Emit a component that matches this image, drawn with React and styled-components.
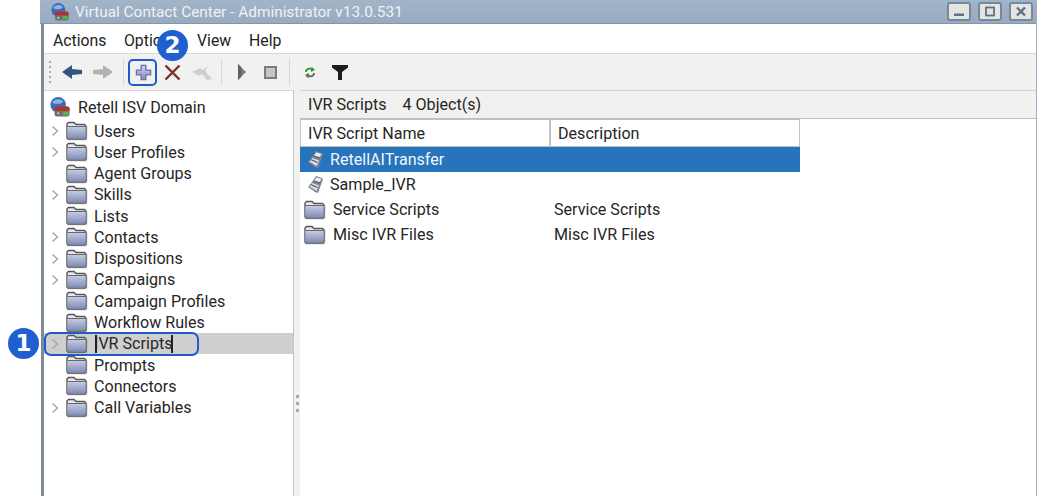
import React from "react";
import styled, { createGlobalStyle } from "styled-components";

const Global = createGlobalStyle`
  html, body { margin: 0; padding: 0; background: #fff; overflow: hidden; }
  body { font-family: Roboto, "Liberation Sans", sans-serif; }
`;
const Page = styled.div`
  position: relative; width: 1038px; height: 496px; padding-left: 41px; box-sizing: border-box; overflow: hidden;
`;
const Win = styled.div`
  width: 996px; height: 496px; display: flex; flex-direction: column; box-sizing: border-box;
  border-left: 3px solid #7d8b99; border-right: 1px solid #9fb2c6; background: #fff;
`;
const TitleBar = styled.div`
  height: 24px; flex: none; display: flex; align-items: center; margin-left: -4px;
  background: linear-gradient(#a2b4c8, #97abc1); border-bottom: 1px solid #8596a8; box-sizing: border-box;
  padding: 0 3px 0 11px; color: #eef2f6; font-size: 15.4px;
`;
const TitleText = styled.span` margin-left: 6px; flex: 1; `;
const WinBtn = styled.div`
  width: 24px; height: 19px; margin-left: 7px; box-sizing: border-box; background: #e4e4e2;
  border: 2px solid #76889b; border-radius: 3px; display: flex; align-items: center; justify-content: center;
`;
const MenuBar = styled.div`
  height: 30px; flex: none; display: flex; align-items: center; padding: 3px 0 0 9px; background: #fff;
  font-size: 15.8px; color: #222; border-bottom: 1px solid #d8d8d8; box-sizing: border-box;
`;
const MenuItem = styled.span` width: ${p => p.$w}px; flex: none; `;
const Toolbar = styled.div`
  height: 36px; flex: none; display: flex; align-items: center; background: #f1f1f0; padding-left: 5px; box-sizing: border-box;
`;
const Grip = styled.div` width: 2px; height: 22px; margin-right: 5px; background: repeating-linear-gradient(#a9a9a9 0 2px, transparent 2px 5px); `;
const ToolBtn = styled.div` width: ${p => p.$w}px; height: 24px; display: flex; align-items: center; justify-content: center; flex: none; `;
const Sep = styled.div` width: 1px; height: 26px; background: #d6d6d6; margin: 0 ${p => p.$m}px; flex: none; `;
const Body = styled.div` flex: 1; display: flex; min-height: 0; background: #f1f1f0; `;
const TreePanel = styled.div`
  width: 250px; flex: none; background: #fff; box-sizing: border-box; padding-top: 4px;
  border-top: 1px solid #d4d4d4; border-right: 1px solid #c4c4c4; font-size: 16.1px; color: #262626;
`;
const Root = styled.div` display: flex; align-items: center; height: 24px; padding-left: 6px; margin-bottom: 1.5px; `;
const RootLabel = styled.span` margin-left: 8px; `;
const Row = styled.div`
  height: 21.27px; display: flex; align-items: center; background: ${p => p.$sel ? "#cfcfcf" : "transparent"};
`;
const Chevron = styled.span` width: 21px; flex: none; display: flex; justify-content: center; `;
const RowLabel = styled.span` margin-left: 6px; white-space: nowrap; `;
const Splitter = styled.div` width: 6px; flex: none; display: flex; align-items: center; justify-content: center; `;
const Dots = styled.div` width: 3px; height: 17px; margin-top: 220px; background: repeating-linear-gradient(#aaa 0 3px, transparent 3px 7px); `;
const RightPanel = styled.div` flex: 1; display: flex; flex-direction: column; min-width: 0; `;
const PanelHead = styled.div`
  height: 29px; flex: none; display: flex; align-items: center; padding-left: 8px; gap: 16px; font-size: 16.1px; color: #262626;
  border-top: 1px solid #d4d4d4; border-bottom: 1px solid #bdbdbd; box-sizing: border-box;
`;
const ListArea = styled.div` flex: 1; background: #fff; font-size: 16.1px; color: #262626; `;
const TableWrap = styled.div` width: 500px; `;
const Head = styled.div` display: flex; height: 28px; box-sizing: border-box; border-bottom: 1px solid #b8c0c8; `;
const HeadCell = styled.div`
  width: 250px; box-sizing: border-box; padding-left: 7px; display: flex; align-items: center;
  border: 1px solid #c4c4c4; border-bottom: none; background: #fff;
`;
const LRow = styled.div`
  height: 25px; display: flex; align-items: center; background: ${p => p.$sel ? "#2774bd" : "transparent"}; color: ${p => p.$sel ? "#f0f6fb" : "inherit"};
`;
const NameCell = styled.div` width: 254px; flex: none; display: flex; align-items: center; padding-left: ${p => p.$p}px; box-sizing: border-box; `;
const LName = styled.span` margin-left: ${p => p.$m}px; `;
const Badge = styled.div`
  position: absolute; left: ${p => p.$x}px; top: ${p => p.$y}px; width: 31px; height: 31px; border-radius: 50%;
  background: #1f5fd0; color: #fff; font: 700 23px/31px "DejaVu Sans", sans-serif; text-align: center;
`;
const Mark = styled.div`
  position: absolute; left: ${p => p.$x}px; top: ${p => p.$y}px; width: ${p => p.$w}px; height: ${p => p.$h}px;
  border: 2.5px solid #1f5bc9; border-radius: ${p => p.$r}px; box-sizing: border-box;
`;
const Caret = styled.div` position: absolute; left: ${p => p.$x}px; top: 335px; width: 1.5px; height: 18px; background: #222; `;

const Folder = () => (
  <svg width="23" height="20" viewBox="0 0 23 20">
    <defs>
      <linearGradient id="fg" x1="0" y1="0" x2="0" y2="1">
        <stop offset="0" stopColor="#c6cbe0" /><stop offset="1" stopColor="#808bb8" />
      </linearGradient>
    </defs>
    <path d="M2 18.5V3.5L3.5 2H9l2 2h9.5L22.5 5.5V18.5l-1 1H3z" fill="#77777c" opacity=".3" />
    <path d="M2 17V3L3.5 1.5H9l2 2h8.5L21 5V17l-1 1H3z" fill="#e8e8ec" stroke="#55555a" strokeWidth="1.4" />
    <path d="M2.5 6h18v11l-.6.5H3l-.5-.5z" fill="url(#fg)" />
    <path d="M2.5 5.5h18" stroke="#66666c" strokeWidth="1" />
  </svg>
);
const Globe = ({ size }) => (
  <svg width={size} height={size} viewBox="0 0 22 22">
    <circle cx="9" cy="8.5" r="8.5" fill="#3a6cbc" />
    <path d="M2.5 6c2.5-4 9-5 12-1-1 2-3 2.5-6 2.5S4.500 7.500 2.500 6z" fill="#8fb2e2" />
    <rect x="5" y="10.500" width="16.500" height="11" rx="2.500" fill="#6f6f72" />
    <path d="M5 13c0-1.500 1-2.500 2.500-2.500H19c1.500 0 2.500 1 2.500 2.500v2H5z" fill="#b3302e" />
    <rect x="14.500" y="16" width="6" height="4" fill="#4fb84f" />
    <circle cx="9" cy="18" r="1.100" fill="#ddd" />
  </svg>
);
const Script = () => (
  <svg width="20" height="20" viewBox="0 0 20 20">
    <path d="M10 1l7 2.500-1 3.500-4 11-3-1-7-5 4-5z" fill="#7f8790" />
    <path d="M10.500 2.500l5 1.500-2 3-5.500-1.500z" fill="#f0f2f4" />
    <path d="M6 8l7 2.500-2.500 5.500L3.500 11.500z" fill="#dde0e4" />
    <path d="M4.500 9.500l7 3" stroke="#4e545b" strokeWidth="1.2" />
    <path d="M7.500 5.800l6.500 2.400" stroke="#5b6168" strokeWidth="1.2" />
  </svg>
);
const Chev = () => (
  <svg width="8" height="12" viewBox="0 0 8 12"><path d="M1.5 1.5L6.500 6l-5 4.500" fill="none" stroke="#a5a5a5" strokeWidth="1.4" /></svg>
);

const tree = [
  ["Users", 1], ["User Profiles", 1], ["Agent Groups", 0], ["Skills", 1], ["Lists", 0], ["Contacts", 1],
  ["Dispositions", 1], ["Campaigns", 1], ["Campaign Profiles", 0], ["Workflow Rules", 0], ["IVR Scripts", 1, true],
  ["Prompts", 0], ["Connectors", 0], ["Call Variables", 1],
];

export default function App() {
  return (
    <Page>
      <Global />
      <Win>
        <TitleBar>
          <Globe size={18} />
          <TitleText>Virtual Contact Center - Administrator v13.0.531</TitleText>
          <WinBtn><svg width="12" height="11" viewBox="0 0 12 11"><rect x="1" y="7.500" width="10" height="2.500" fill="#5f6f80" /></svg></WinBtn>
          <WinBtn><svg width="12" height="11" viewBox="0 0 12 11"><rect x="2" y="1.500" width="8" height="8" fill="none" stroke="#5f6f80" strokeWidth="1.8" /></svg></WinBtn>
          <WinBtn><svg width="12" height="11" viewBox="0 0 12 11"><path d="M2 1.500l8 8M10 1.500l-8 8" stroke="#5f6f80" strokeWidth="2.400" /></svg></WinBtn>
        </TitleBar>
        <MenuBar>
          <MenuItem $w={71}>Actions</MenuItem>
          <MenuItem $w={73}>Options</MenuItem>
          <MenuItem $w={52}>View</MenuItem>
          <MenuItem $w={40}>Help</MenuItem>
        </MenuBar>
        <Toolbar>
          <Grip />
          <ToolBtn $w={31}><svg width="20" height="14" viewBox="0 0 20 14"><path d="M0 7l10-7v4l10 1v4L10 10v4z" fill="#33557f" /></svg></ToolBtn>
          <ToolBtn $w={31}><svg width="20" height="14" viewBox="0 0 20 14"><path d="M20 7L10 0v4L0 5v4l10 1v4z" fill="#b3b3b3" /></svg></ToolBtn>
          <Sep $m={5} />
          <ToolBtn $w={28}>
            <svg width="17" height="17" viewBox="0 0 18 18">
              <defs><linearGradient id="pg" x1="0" y1="0" x2="0" y2="1"><stop offset="0" stopColor="#cdd1ea" /><stop offset="1" stopColor="#868ec4" /></linearGradient></defs>
              <path d="M6.500 1.500h5v5h5v5h-5v5h-5v-5h-5v-5h5z" fill="url(#pg)" stroke="#6a72a8" strokeWidth="1.400" />
            </svg>
          </ToolBtn>
          <ToolBtn $w={30}><svg width="17" height="17" viewBox="0 0 17 17"><path d="M1.500 1.500l14 14M15.500 1.500l-14 14" stroke="#7a2f2f" strokeWidth="2.400" /></svg></ToolBtn>
          <ToolBtn $w={30}><svg width="21" height="17" viewBox="0 0 21 17"><path d="M0 8l8-4 3 2 6-5-4 6 7 8-5 1-5-6-3 2z" fill="#cfcfcf" /></svg></ToolBtn>
          <Sep $m={4} />
          <ToolBtn $w={31}><svg width="9" height="16" viewBox="0 0 9 16"><path d="M1 0l8 8-8 8z" fill="#7c7c7c" /><path d="M1 0v16l3-3V3z" fill="#5f5f5f" /></svg></ToolBtn>
          <ToolBtn $w={26}><svg width="13" height="13" viewBox="0 0 13 13"><rect x="1" y="1" width="11" height="11" fill="#c6c6c6" stroke="#7c7c7c" strokeWidth="2" /></svg></ToolBtn>
          <Sep $m={6} />
          <ToolBtn $w={28}><svg width="12" height="13" viewBox="0 0 12 13"><path d="M1 6c0-3 3-5 6-4l1-1 3 3-4 2 0-2C5 3 3 4 3 6z" fill="#2e9a3c" /><path d="M11 7c0 3-3 5-6 4l-1 1-3-3 4-2 0 2c2 1 4 0 4-2z" fill="#5f6b60" /></svg></ToolBtn>
          <ToolBtn $w={32}><svg width="16" height="16" viewBox="0 0 16 16"><path d="M0 1h16v2.500L10 8v8H6V8L0 3.500z" fill="#1c1c1c" /></svg></ToolBtn>
        </Toolbar>
        <Body>
          <TreePanel>
            <Root><Globe size={20} /><RootLabel>Retell ISV Domain</RootLabel></Root>
            {tree.map(([label, exp, sel]) => (
              <Row key={label} $sel={sel}>
                <Chevron>{exp ? <Chev /> : null}</Chevron>
                <Folder />
                <RowLabel>{label}</RowLabel>
              </Row>
            ))}
          </TreePanel>
          <Splitter><Dots /></Splitter>
          <RightPanel>
            <PanelHead><span>IVR Scripts</span><span>4 Object(s)</span></PanelHead>
            <ListArea>
              <TableWrap>
                <Head><HeadCell>IVR Script Name</HeadCell><HeadCell>Description</HeadCell></Head>
                <LRow $sel><NameCell $p={6}><Script /><LName $m={4}>RetellAITransfer</LName></NameCell></LRow>
                <LRow><NameCell $p={6}><Script /><LName $m={4}>Sample_IVR</LName></NameCell></LRow>
                <LRow><NameCell $p={3}><Folder /><LName $m={7}>Service Scripts</LName></NameCell>Service Scripts</LRow>
                <LRow><NameCell $p={3}><Folder /><LName $m={7}>Misc IVR Files</LName></NameCell>Misc IVR Files</LRow>
              </TableWrap>
            </ListArea>
          </RightPanel>
        </Body>
      </Win>
      <Mark $x={128} $y={59} $w={29} $h={27} $r={5} />
      <Mark $x={44} $y={332} $w={155} $h={24} $r={7} />
      <Caret $x={95} />
      <Caret $x={171} />
      <Badge $x={157} $y={30}>2</Badge>
      <Badge $x={8} $y={328}>1</Badge>
    </Page>
  );
}
